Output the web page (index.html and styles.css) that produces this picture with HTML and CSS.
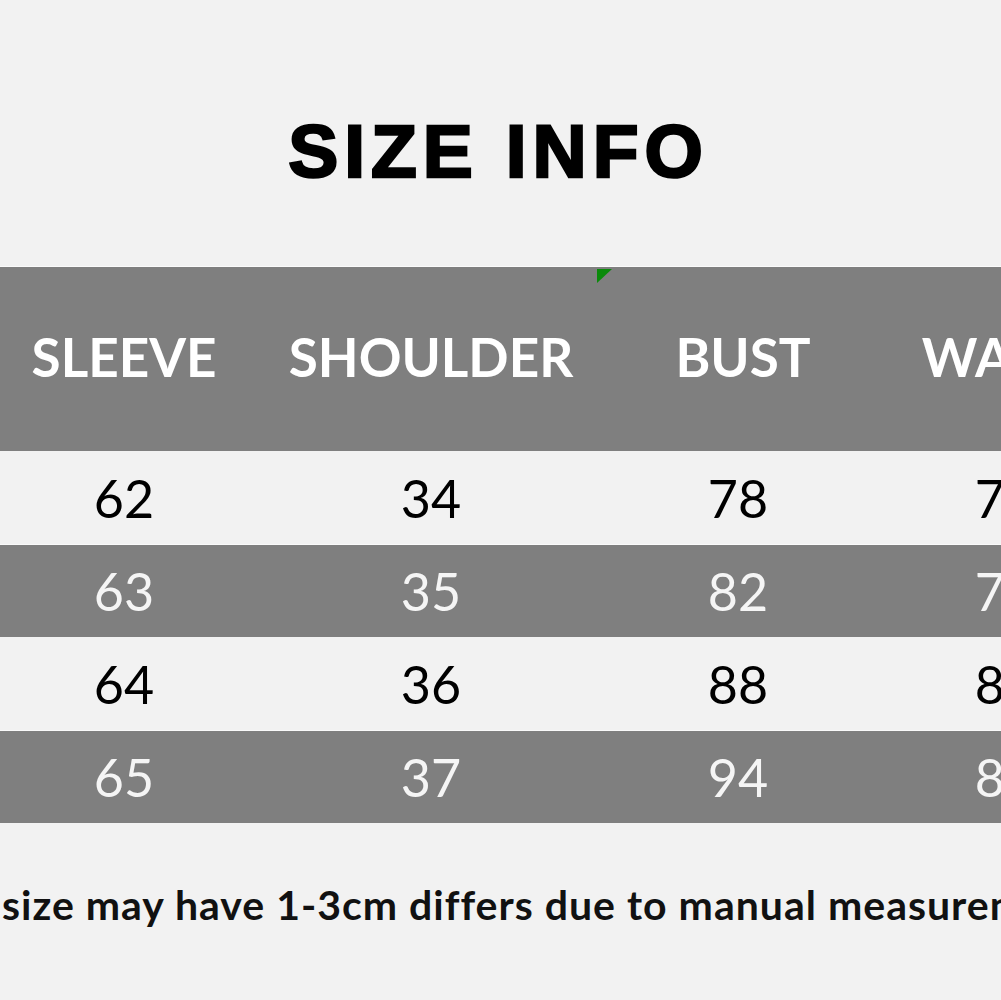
FILE: index.html
```html
<!DOCTYPE html>
<html>
<head>
<meta charset="utf-8">
<link rel="stylesheet" href="styles.css">
</head>
<body>
<div class="page">
  <h1 class="title">SIZE INFO</h1>
  <div class="table-wrap">
    <div class="table">
      <div class="row head">
        <div class="cell">SLEEVE</div>
        <div class="cell">SHOULDER</div>
        <div class="cell marked bust-shift">BUST</div>
        <div class="cell">WAIST</div>
      </div>
      <div class="row light">
        <div class="cell">62</div>
        <div class="cell">34</div>
        <div class="cell">78</div>
        <div class="cell">70</div>
      </div>
      <div class="row dark">
        <div class="cell">63</div>
        <div class="cell">35</div>
        <div class="cell">82</div>
        <div class="cell">74</div>
      </div>
      <div class="row light">
        <div class="cell">64</div>
        <div class="cell">36</div>
        <div class="cell">88</div>
        <div class="cell">80</div>
      </div>
      <div class="row dark">
        <div class="cell">65</div>
        <div class="cell">37</div>
        <div class="cell">94</div>
        <div class="cell">86</div>
      </div>
    </div>
  </div>
  <p class="note">size may have 1-3cm differs due to manual measurement</p>
</div>
</body>
</html>
```

FILE: styles.css
```css
html, body {
  margin: 0;
  padding: 0;
  background: #f2f2f2;
}
.page {
  width: 1001px;
  height: 1000px;
  overflow: hidden;
  background: #f2f2f2;
  display: flex;
  flex-direction: column;
}
.title {
  margin: 114px 0 0 0;
  padding-right: 4px;
  font-family: "Liberation Sans", Arial, sans-serif;
  font-weight: 700;
  font-size: 75px;
  line-height: 1;
  letter-spacing: 6px;
  text-align: center;
  color: #000;
  -webkit-text-stroke: 2.5px #000;
}
.table-wrap {
  margin-top: 77px;
  width: 1001px;
  overflow: hidden;
  border-top: 1px solid #fbfbfb;
}
.table {
  margin-left: -30px;
  display: flex;
  flex-direction: column;
}
.row {
  display: grid;
  grid-template-columns: 308px 306px 308px 226px;
  height: 93px;
}
.row .cell {
  display: flex;
  align-items: center;
  justify-content: center;
  font-family: Lato, "Noto Sans", sans-serif;
  font-size: 52px;
  white-space: nowrap;
}
.row.head {
  height: 184px;
  background: #7f7f7f;
}
.row.head .cell {
  position: relative;
  font-weight: 700;
  font-size: 53px;
  color: #fff;
  padding-bottom: 6px;
}
.row.head .cell.bust-shift {
  padding-left: 10px;
}
.row.head .cell.marked::before {
  content: "";
  position: absolute;
  left: 13px;
  top: 2px;
  width: 0;
  height: 0;
  border-top: 14px solid #0a8a0a;
  border-right: 15px solid transparent;
}
.row.light {
  background: #f2f2f2;
}
.row.light .cell {
  color: #000;
}
.row.dark {
  background: #7f7f7f;
  border-top: 1px solid #fafafa;
  height: 92px;
}
.row.dark .cell {
  color: #f5f5f5;
}
.note {
  margin: 61px 0 0 0;
  padding-left: 2px;
  font-family: Lato, "Noto Sans", sans-serif;
  font-weight: 700;
  font-size: 41px;
  letter-spacing: 1px;
  line-height: 1;
  color: #111;
  white-space: nowrap;
}
```
